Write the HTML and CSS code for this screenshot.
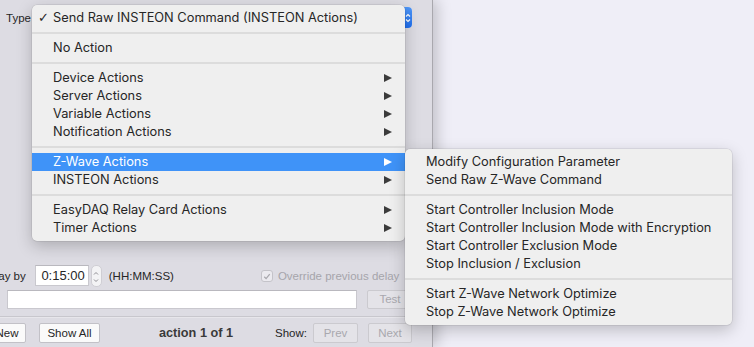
FILE: index.html
```html
<!DOCTYPE html>
<html lang="en">
<head>
    <meta charset="UTF-8">
    <title>Action Type</title>
    <link rel="stylesheet" href="styles.css">
</head>
<body>
<div class="desktop">
    <div class="window">
        <div class="type-row">
            <span class="label">Type</span>
            <div class="popup">
                <span class="popup-cap">
                    <svg width="6" height="12" viewBox="0 0 6 12"><path d="M1 4.5 3 2.5 5 4.5M1 7.5 3 9.5 5 7.5" fill="none" stroke="#fff" stroke-width="1.2"/></svg>
                </span>
            </div>
        </div>
        <div class="spacer"></div>
        <div class="delay-row">
            <span class="label">Delay by</span>
            <span class="field time">0:15:00</span>
            <span class="stepper">
                <svg width="10" height="22" viewBox="0 0 10 22"><path d="M3 8.5 5 6.5 7 8.5M3 13.5 5 15.5 7 13.5" fill="none" stroke="#8e8d93" stroke-width="1"/></svg>
            </span>
            <span class="hint">(HH:MM:SS)</span>
            <span class="check">
                <svg width="11" height="11" viewBox="0 0 11 11"><path d="M2.5 5.8 4.5 7.8 8.5 2.8" fill="none" stroke="#a8a7ad" stroke-width="1.4"/></svg>
            </span>
            <span class="check-label">Override previous delay</span>
        </div>
        <div class="field-row">
            <span class="field wide"></span>
            <span class="btn disabled test">Test</span>
        </div>
        <div class="rule"></div>
        <div class="bottom-row">
            <span class="btn new">New</span>
            <span class="btn show-all">Show All</span>
            <span class="count">action 1 of 1</span>
            <span class="show-label">Show:</span>
            <span class="btn disabled prev">Prev</span>
            <span class="btn disabled next">Next</span>
        </div>
    </div>

    <ul class="menu main-menu">
        <li class="item"><span class="tick">✓</span>Send Raw INSTEON Command (INSTEON Actions)</li>
        <li class="sep"></li>
        <li class="item">No Action</li>
        <li class="sep"></li>
        <li class="item sub">Device Actions</li>
        <li class="item sub">Server Actions</li>
        <li class="item sub">Variable Actions</li>
        <li class="item sub">Notification Actions</li>
        <li class="sep"></li>
        <li class="item sub active">Z-Wave Actions</li>
        <li class="item sub">INSTEON Actions</li>
        <li class="sep"></li>
        <li class="item sub">EasyDAQ Relay Card Actions</li>
        <li class="item sub">Timer Actions</li>
    </ul>

    <ul class="menu sub-menu">
        <li class="item">Modify Configuration Parameter</li>
        <li class="item">Send Raw Z-Wave Command</li>
        <li class="sep"></li>
        <li class="item">Start Controller Inclusion Mode</li>
        <li class="item">Start Controller Inclusion Mode with Encryption</li>
        <li class="item">Start Controller Exclusion Mode</li>
        <li class="item">Stop Inclusion / Exclusion</li>
        <li class="sep"></li>
        <li class="item">Start Z-Wave Network Optimize</li>
        <li class="item">Stop Z-Wave Network Optimize</li>
    </ul>
</div>
</body>
</html>
```

FILE: styles.css
```css
* {
    margin: 0;
    padding: 0;
    box-sizing: border-box;
}

ul {
    list-style: none;
}

body {
    background-color: #efeef7;
    font-family: Inter, "Liberation Sans", sans-serif;
    color: #262626;
    overflow: hidden;
}

.desktop {
    position: relative;
    width: 754px;
    height: 347px;
    overflow: hidden;
}

/* window behind the menu */
.window {
    position: absolute;
    left: -40px;
    top: 0;
    width: 473px;
    height: 347px;
    display: flex;
    flex-direction: column;
    background-color: #dddce3;
    border-right: 1px solid #a9a8ae;
    box-shadow: 4px 0 14px rgba(0, 0, 0, .2);
    font-family: "Liberation Sans", Arial, sans-serif;
    font-size: 11.5px;
}

.type-row {
    display: flex;
    align-items: center;
    height: 21px;
    margin-top: 7px;
    padding-left: 46px;
    padding-right: 20px;
}

.popup {
    flex: 1;
    height: 21px;
    margin-left: 2px;
    display: flex;
    justify-content: flex-end;
    background-color: #fff;
    border-radius: 4px;
}

.popup-cap {
    width: 18px;
    height: 21px;
    border-radius: 0 4px 4px 0;
    background: linear-gradient(#4f97f8, #1f6ff0);
    display: flex;
    align-items: center;
    justify-content: flex-end;
    padding-right: 1px;
}

.spacer {
    flex: 1;
}

.delay-row {
    display: flex;
    align-items: center;
    height: 21px;
    padding-left: 21px;
}

.field {
    height: 21px;
    background-color: #fff;
    border: 1px solid #c9c8ce;
    border-top-color: #b9b8be;
}

.time {
    width: 54px;
    margin-left: 9px;
    font-size: 13px;
    line-height: 19px;
    text-align: right;
    padding-right: 3px;
}

.stepper {
    width: 11px;
    height: 22px;
    margin-left: 2px;
    border: 1px solid #cfced4;
    border-radius: 5px;
    background-color: #f3f3f5;
    display: flex;
}

.stepper svg {
    margin-left: -1px;
}

.hint {
    margin-left: 7px;
}

.check {
    width: 12px;
    height: 12px;
    margin-left: 87px;
    border: 1px solid #c4c3c9;
    border-radius: 3px;
    background-color: #ebeaef;
    display: flex;
}

.check-label {
    margin-left: 5px;
    color: #a6a5ab;
}

.field-row {
    display: flex;
    height: 19px;
    margin-top: 4px;
    padding-left: 47px;
}

.wide {
    width: 350px;
    height: 19px;
}

.btn {
    height: 20px;
    line-height: 18px;
    text-align: center;
    background-color: #fafafa;
    border: 1px solid #c2c1c7;
    border-radius: 2px;
}

.btn.disabled {
    background-color: #e4e3e8;
    border-color: #cbcacf;
    color: #a9a8ae;
}

.test {
    width: 46px;
    height: 19px;
    margin-left: 10px;
    line-height: 17px;
}

.rule {
    margin-top: 7px;
    background-color: #c8c7cd;
    border-bottom: 1px solid #e7e6eb;
    height: 2px;
}

.bottom-row {
    display: flex;
    align-items: center;
    height: 20px;
    margin-top: 5px;
    margin-bottom: 4px;
    padding-left: 28px;
}

.new {
    width: 38px;
}

.show-all {
    width: 61px;
    margin-left: 13px;
}

.count {
    margin-left: 59px;
    font-size: 12.7px;
    font-weight: bold;
    color: #3a3a3a;
}

.show-label {
    margin-left: 42px;
}

.prev {
    width: 45px;
    margin-left: 6px;
}

.next {
    width: 44px;
    margin-left: 10px;
}

/* popup menus */
.menu {
    position: absolute;
    padding: 4px 0;
    background-color: #efefef;
    border-radius: 5px;
    box-shadow: 0 0 0 .5px rgba(0, 0, 0, .12), 0 5px 16px rgba(0, 0, 0, .22);
    font-size: 12.8px;
}

.main-menu {
    left: 32px;
    top: 5px;
    width: 373px;
}

.sub-menu {
    left: 405px;
    top: 149px;
    width: 327px;
}

.item {
    position: relative;
    height: 18px;
    line-height: 17px;
    padding-left: 21px;
    white-space: nowrap;
}

.tick {
    position: absolute;
    left: 6px;
    font-family: "DejaVu Sans", sans-serif;
    font-size: 13px;
    font-weight: bold;
}

.item.sub::after {
    content: "";
    position: absolute;
    right: 13px;
    top: 5px;
    border-left: 8px solid #3b3b3b;
    border-top: 4.5px solid transparent;
    border-bottom: 4.5px solid transparent;
}

.item.active {
    background-color: #3f93f8;
    color: #fff;
}

.item.active::after {
    border-left-color: #fff;
}

.sep {
    height: 2px;
    margin: 5px 0;
    background-color: #dcdcdc;
}
```
